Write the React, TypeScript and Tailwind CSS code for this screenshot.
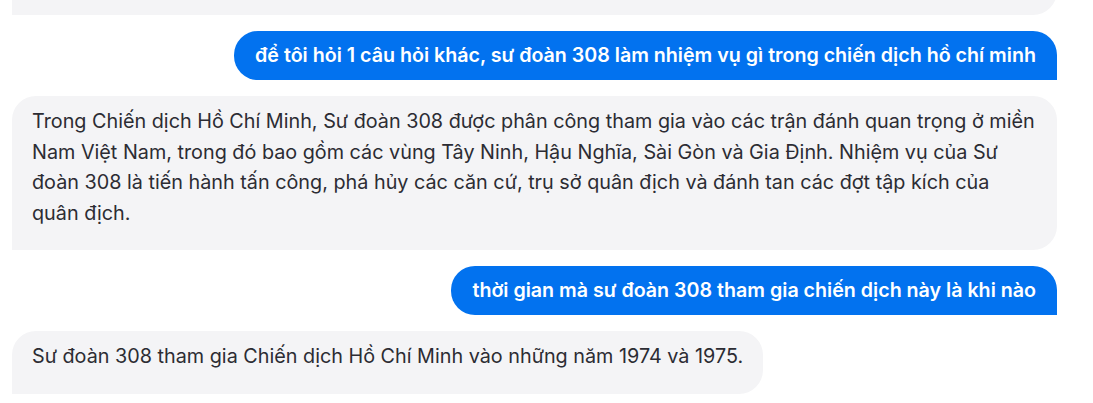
import React from "react";

const font = { fontFamily: "Inter, 'Noto Sans', sans-serif" };

function Ai({ children, className = "" }: { children: React.ReactNode; className?: string }) {
  return (
    <div className={"self-start rounded-3xl rounded-bl-none bg-[#f4f4f6] px-5 pt-[10px] pb-[22px] text-[19.8px] leading-[30.6px] text-[#2c2c33] " + className}>
      {children}
    </div>
  );
}

function User({ children }: { children: React.ReactNode }) {
  return (
    <div className="self-end rounded-3xl rounded-br-none bg-[#0272ef] px-[21px] py-[10px] text-[19.65px] leading-[29px] font-semibold text-white">
      {children}
    </div>
  );
}

export default function App() {
  return (
    <div className="h-[403px] w-[1093px] overflow-hidden bg-white" style={font}>
      <div className="flex flex-col gap-4 pl-3 pr-9">
        <div className="-mt-[45px] h-[60px] rounded-3xl rounded-bl-none bg-[#f4f4f6]" />
        <User>để tôi hỏi 1 câu hỏi khác, sư đoàn 308 làm nhiệm vụ gì trong chiến dịch hồ chí minh</User>
        <Ai>
          Trong Chiến dịch Hồ Chí Minh, Sư đoàn 308 được phân công tham gia vào các trận đánh quan trọng ở miền Nam Việt Nam, trong đó bao gồm các vùng Tây Ninh, Hậu Nghĩa, Sài Gòn và Gia Định. Nhiệm vụ của Sư đoàn 308 là tiến hành tấn công, phá hủy các căn cứ, trụ sở quân địch và đánh tan các đợt tập kích của quân địch.
        </Ai>
        <User>thời gian mà sư đoàn 308 tham gia chiến dịch này là khi nào</User>
        <Ai>Sư đoàn 308 tham gia Chiến dịch Hồ Chí Minh vào những năm 1974 và 1975.</Ai>
      </div>
    </div>
  );
}
